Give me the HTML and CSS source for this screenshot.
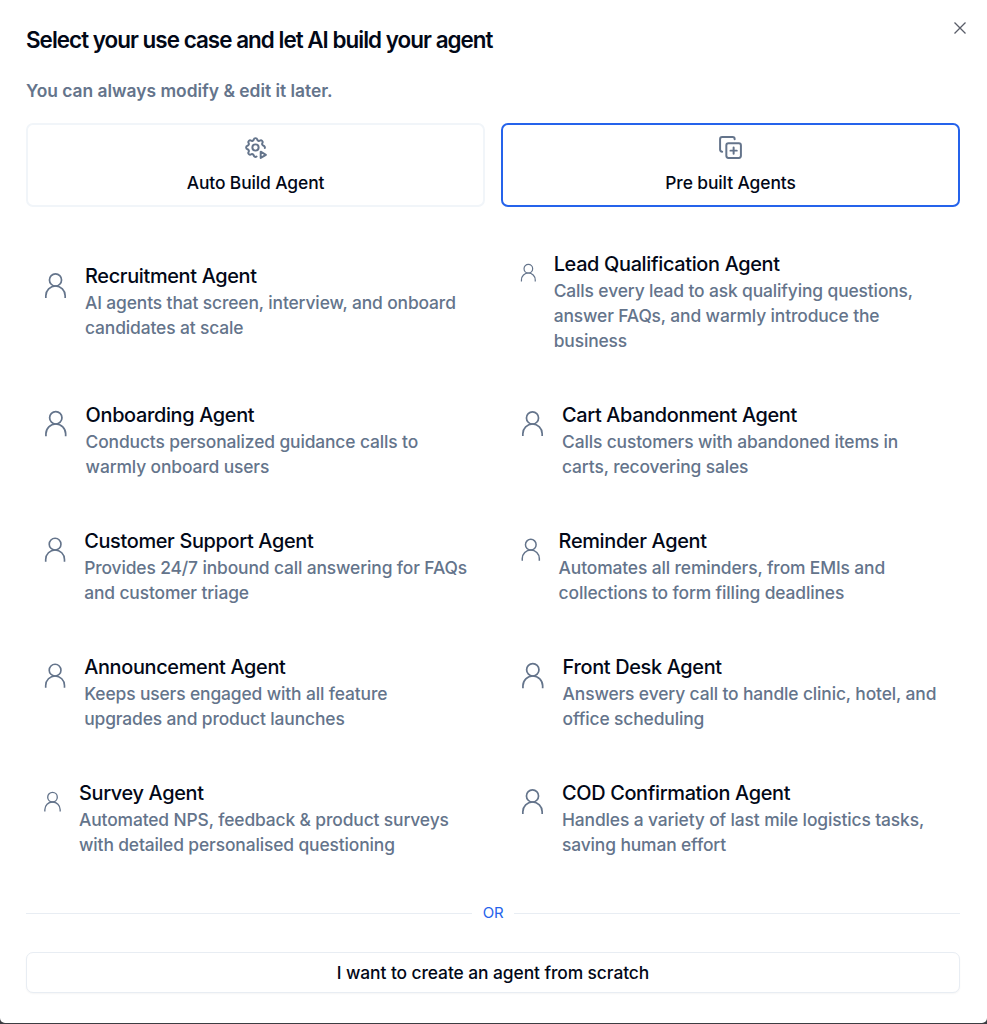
FILE: index.html
```html
<!DOCTYPE html>
<html lang="en">
<head>
    <meta charset="UTF-8">
    <meta name="viewport" content="width=device-width, initial-scale=1.0">
    <title>Select Agent</title>
    <link rel="stylesheet" href="styles.css">
</head>
<body>

<!-- shared user icon -->
<svg class="sprite">
    <symbol id="user" viewBox="0 0 24 24">
        <circle cx="12" cy="7" r="5"/>
        <path d="M4 22v-2a8 8 0 0 1 16 0v2"/>
    </symbol>
</svg>

<div class="modal">
    <button class="close" aria-label="Close">
        <svg viewBox="0 0 12 12"><path d="M0.5 0.5l11 11M11.5 0.5l-11 11"/></svg>
    </button>

    <h1>Select your use case and let AI build your agent</h1>
    <p class="subtitle">You can always modify &amp; edit it later.</p>

    <div class="tabs">
        <button class="tab">
            <svg class="tab-icon" viewBox="0 0 24 24">
                <path d="M13 20.693c-.905 .628 -2.36 .292 -2.675 -1.01a1.724 1.724 0 0 0 -2.573 -1.066c-1.543 .94 -3.31 -.826 -2.37 -2.37a1.724 1.724 0 0 0 -1.065 -2.572c-1.756 -.426 -1.756 -2.924 0 -3.35a1.724 1.724 0 0 0 1.066 -2.573c-.94 -1.543 .826 -3.31 2.37 -2.37c1 .608 2.296 .07 2.572 -1.065c.426 -1.756 2.924 -1.756 3.35 0a1.724 1.724 0 0 0 2.573 1.066c1.543 -.94 3.31 .826 2.37 2.37a1.724 1.724 0 0 0 1.065 2.572c1.074 .26 1.49 1.296 1.252 2.158"/>
                <circle cx="12" cy="12" r="3"/>
                <path d="M17 22l5 -3l-5 -3z"/>
            </svg>
            <span>Auto Build Agent</span>
        </button>
        <button class="tab active">
            <svg class="tab-icon" viewBox="0 0 24 24">
                <rect x="8" y="8" width="14" height="14" rx="2"/>
                <path d="M4 16c-1.1 0-2-.9-2-2V4c0-1.1.9-2 2-2h10c1.1 0 2 .9 2 2"/>
                <path d="M15 12v6M12 15h6"/>
            </svg>
            <span>Pre built Agents</span>
        </button>
    </div>

    <div class="agents">
        <div class="agent">
            <svg class="icon"><use href="#user"/></svg>
            <div>
                <h2>Recruitment Agent</h2>
                <p>AI agents that screen, interview, and onboard<br>candidates at scale</p>
            </div>
        </div>
        <div class="agent">
            <svg class="icon icon-xs"><use href="#user"/></svg>
            <div>
                <h2>Lead Qualification Agent</h2>
                <p>Calls every lead to ask qualifying questions,<br>answer FAQs, and warmly introduce the<br>business</p>
            </div>
        </div>
        <div class="agent">
            <svg class="icon icon-lg"><use href="#user"/></svg>
            <div>
                <h2>Onboarding Agent</h2>
                <p>Conducts personalized guidance calls to<br>warmly onboard users</p>
            </div>
        </div>
        <div class="agent">
            <svg class="icon"><use href="#user"/></svg>
            <div>
                <h2>Cart Abandonment Agent</h2>
                <p>Calls customers with abandoned items in<br>carts, recovering sales</p>
            </div>
        </div>
        <div class="agent">
            <svg class="icon icon-md"><use href="#user"/></svg>
            <div>
                <h2>Customer Support Agent</h2>
                <p>Provides 24/7 inbound call answering for FAQs<br>and customer triage</p>
            </div>
        </div>
        <div class="agent">
            <svg class="icon icon-base"><use href="#user"/></svg>
            <div>
                <h2>Reminder Agent</h2>
                <p>Automates all reminders, from EMIs and<br>collections to form filling deadlines</p>
            </div>
        </div>
        <div class="agent">
            <svg class="icon icon-md"><use href="#user"/></svg>
            <div>
                <h2>Announcement Agent</h2>
                <p>Keeps users engaged with all feature<br>upgrades and product launches</p>
            </div>
        </div>
        <div class="agent">
            <svg class="icon icon-lg"><use href="#user"/></svg>
            <div>
                <h2>Front Desk Agent</h2>
                <p>Answers every call to handle clinic, hotel, and<br>office scheduling</p>
            </div>
        </div>
        <div class="agent">
            <svg class="icon icon-sm"><use href="#user"/></svg>
            <div>
                <h2>Survey Agent</h2>
                <p>Automated NPS, feedback &amp; product surveys<br>with detailed personalised questioning</p>
            </div>
        </div>
        <div class="agent">
            <svg class="icon"><use href="#user"/></svg>
            <div>
                <h2>COD Confirmation Agent</h2>
                <p>Handles a variety of last mile logistics tasks,<br>saving human effort</p>
            </div>
        </div>
    </div>

    <div class="divider">OR</div>

    <button class="scratch">I want to create an agent from scratch</button>
</div>

</body>
</html>
```
FILE: styles.css
```css
* {
    box-sizing: border-box;
}
body {
    margin: 0;
    background-color: #3c3d42;
    font-family: Inter, "Liberation Sans", sans-serif;
    color: #020817;
}
h1, h2, p {
    margin: 0;
}
button {
    font-family: inherit;
    color: inherit;
    background-color: #fff;
    padding: 0;
    cursor: pointer;
}
svg {
    fill: none;
    stroke: #64748b;
}
.sprite {
    position: absolute;
    width: 0;
    height: 0;
}
.modal {
    position: relative;
    height: 1022.5px;
    padding: 26px 27px 0 26px;
    background-color: #fff;
    border-radius: 0 0 5px 5px;
}
.close {
    position: absolute;
    top: 22px;
    right: 21px;
    width: 12px;
    height: 12px;
    border: none;
    display: flex;
}
.close svg {
    width: 12px;
    height: 12px;
    stroke: #595d68;
    stroke-width: 1.3;
}
h1 {
    font-size: 22.4px;
    line-height: 28px;
    font-weight: 600;
    letter-spacing: -0.96px;
}
.subtitle {
    margin-top: 24px;
    font-size: 17.4px;
    line-height: 25px;
    font-weight: 600;
    letter-spacing: -0.01px;
    color: #64748b;
}
.tabs {
    display: grid;
    grid-template-columns: 1fr 1fr;
    gap: 16px;
    margin-top: 20px;
}
.tab {
    display: flex;
    flex-direction: column;
    align-items: center;
    height: 84px;
    padding-top: 10.4px;
    border: 2px solid #f1f5f9;
    border-radius: 7px;
    font-size: 17.4px;
    line-height: 25px;
    font-weight: 500;
    letter-spacing: -0.1px;
}
.tab.active {
    border-color: #2563eb;
}
.tab-icon {
    width: 25px;
    height: 25px;
    margin-bottom: 10px;
    stroke-width: 1.9;
    stroke-linecap: round;
    stroke-linejoin: round;
}
.agents {
    display: grid;
    grid-template-columns: minmax(0, 1fr) minmax(0, 1fr);
    column-gap: 20px;
    row-gap: 17px;
    margin-top: 27px;
}
.agent {
    display: flex;
    align-items: center;
    gap: 15px;
    padding: 15px;
    white-space: nowrap;
}
.icon {
    width: 29px;
    height: 30px;
    align-self: flex-start;
    margin-top: 9.3px;
    flex-shrink: 0;
    stroke-width: 1.4;
}
.icon-lg {
    width: 29.6px;
}
.icon-md {
    width: 28.2px;
}
.icon-base {
    width: 25.6px;
}
.icon-sm {
    width: 23px;
}
.icon-xs {
    width: 20.7px;
}
.agent:first-child .icon {
    margin-top: 21.5px;
}
.agent:first-child > div {
    padding-bottom: 1.5px;
}
.agent h2 {
    font-size: 19.9px;
    line-height: 30px;
    font-weight: 500;
    letter-spacing: -0.33px;
}
.agent p {
    margin-top: -1px;
    font-size: 17.4px;
    line-height: 25px;
    font-weight: 500;
    letter-spacing: -0.12px;
    color: #64748b;
}
.divider {
    display: flex;
    align-items: center;
    gap: 10.5px;
    margin-top: 31px;
    font-size: 15px;
    line-height: 20px;
    letter-spacing: -0.3px;
    color: #2563eb;
}
.divider::before, .divider::after {
    content: "";
    flex: 1;
    height: 1px;
    background-color: #e8edf3;
}
.scratch {
    width: 100%;
    height: 41px;
    margin-top: 29px;
    border: 1px solid #e8edf3;
    border-radius: 7px;
    font-size: 17.4px;
    font-weight: 500;
    letter-spacing: -0.08px;
    box-shadow: 0 1px 2px rgba(0, 0, 0, 0.04);
}
```
